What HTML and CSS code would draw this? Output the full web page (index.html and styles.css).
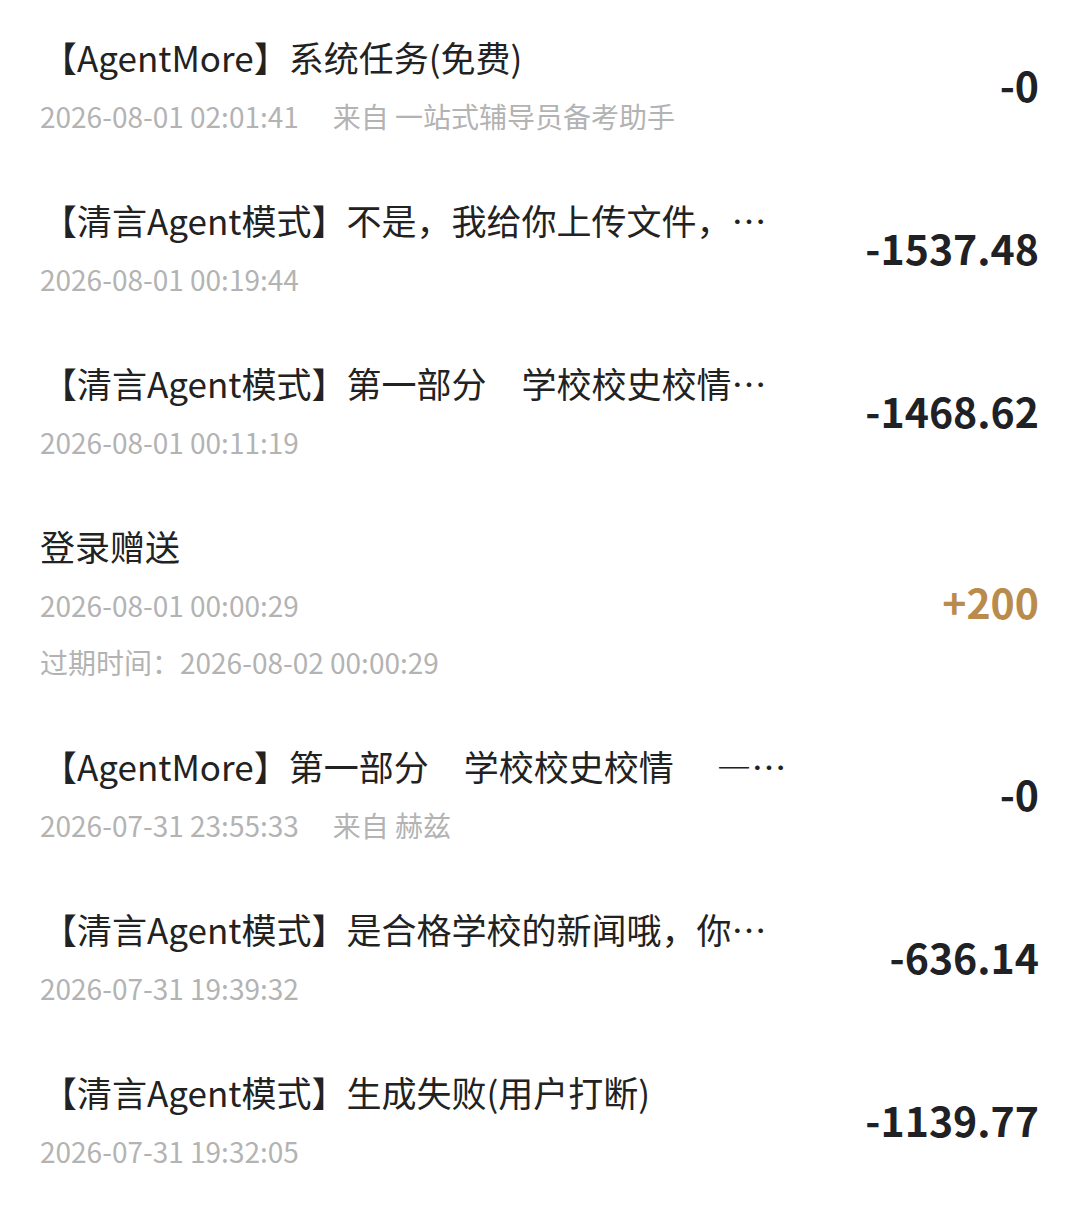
FILE: index.html
```html
<!DOCTYPE html>
<html lang="zh-CN">
<head>
    <meta charset="UTF-8">
    <meta name="viewport" content="width=device-width, initial-scale=1.0">
    <title>积分明细</title>
    <link rel="stylesheet" href="styles.css">
</head>
<body>
    <div class="list">
        <div class="row">
            <div class="info">
                <div class="title">【AgentMore】系统任务(免费)</div>
                <div class="meta first">2026-08-01 02:01:41<span class="from">来自 一站式辅导员备考助手</span></div>
            </div>
            <div class="amount">-0</div>
        </div>
        <div class="row">
            <div class="info">
                <div class="title">【清言Agent模式】不是，我给你上传文件，…</div>
                <div class="meta first">2026-08-01 00:19:44</div>
            </div>
            <div class="amount">-1537.48</div>
        </div>
        <div class="row">
            <div class="info">
                <div class="title">【清言Agent模式】第一部分　学校校史校情…</div>
                <div class="meta first">2026-08-01 00:11:19</div>
            </div>
            <div class="amount">-1468.62</div>
        </div>
        <div class="row">
            <div class="info">
                <div class="title plain">登录赠送</div>
                <div class="meta first">2026-08-01 00:00:29</div>
                <div class="meta">过期时间：2026-08-02 00:00:29</div>
            </div>
            <div class="amount plus">+200</div>
        </div>
        <div class="row">
            <div class="info">
                <div class="title">【AgentMore】第一部分　学校校史校情　 —…</div>
                <div class="meta first">2026-07-31 23:55:33<span class="from">来自 赫兹</span></div>
            </div>
            <div class="amount">-0</div>
        </div>
        <div class="row">
            <div class="info">
                <div class="title">【清言Agent模式】是合格学校的新闻哦，你…</div>
                <div class="meta first">2026-07-31 19:39:32</div>
            </div>
            <div class="amount">-636.14</div>
        </div>
        <div class="row">
            <div class="info">
                <div class="title">【清言Agent模式】生成失败(用户打断)</div>
                <div class="meta first">2026-07-31 19:32:05</div>
            </div>
            <div class="amount">-1139.77</div>
        </div>
    </div>
</body>
</html>
```

FILE: styles.css
```css
body {
    margin: 0;
    background-color: #ffffff;
    font-family: "Noto Sans CJK SC", "Noto Sans", sans-serif;
    color: #222222;
}
.list {
    padding-top: 7px;
}
.row {
    display: flex;
    align-items: center;
    justify-content: space-between;
    padding: 25px 41px 25px 40px;
}
.info {
    min-width: 0;
}
.title {
    font-size: 35px;
    line-height: 50px;
    white-space: nowrap;
    margin-left: 2px;
}
.title.plain {
    margin-left: 0;
}
.meta {
    font-size: 28px;
    line-height: 57px;
    color: #b3b3b3;
    white-space: nowrap;
}
.meta.first {
    margin-top: 6px;
}
.from {
    margin-left: 34px;
}
.amount {
    font-size: 41px;
    font-weight: bold;
    color: #1f2125;
    white-space: nowrap;
    margin-bottom: 10px;
}
.amount.plus {
    color: #b98b4c;
}
```
